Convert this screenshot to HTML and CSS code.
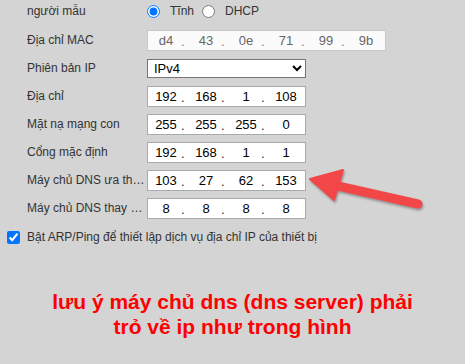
FILE: index.html
```html
<!DOCTYPE html>
<html lang="vi">
<head>
    <meta charset="UTF-8">
    <meta name="viewport" content="width=device-width, initial-scale=1.0">
    <title>Cài đặt mạng</title>
    <link rel="stylesheet" href="styles.css">
</head>
<body>
    <div class="form">
        <div class="row row-mode">
            <span class="label">người mẫu</span>
            <div class="radios">
                <label><input type="radio" name="mode" checked>Tĩnh</label>
                <label><input type="radio" name="mode">DHCP</label>
            </div>
        </div>
        <div class="row">
            <span class="label">Địa chỉ MAC</span>
            <div class="ip-box mac">
                <input type="text" value="d4" disabled><span class="dot">.</span>
                <input type="text" value="43" disabled><span class="dot">.</span>
                <input type="text" value="0e" disabled><span class="dot">.</span>
                <input type="text" value="71" disabled><span class="dot">.</span>
                <input type="text" value="99" disabled><span class="dot">.</span>
                <input type="text" value="9b" disabled>
            </div>
        </div>
        <div class="row">
            <span class="label">Phiên bản IP</span>
            <select class="select">
                <option>IPv4</option>
                <option>IPv6</option>
            </select>
        </div>
        <div class="row">
            <span class="label">Địa chỉ</span>
            <div class="ip-box">
                <input type="text" value="192"><span class="dot">.</span>
                <input type="text" value="168"><span class="dot">.</span>
                <input type="text" value="1"><span class="dot">.</span>
                <input type="text" value="108">
            </div>
        </div>
        <div class="row">
            <span class="label">Mặt nạ mạng con</span>
            <div class="ip-box">
                <input type="text" value="255"><span class="dot">.</span>
                <input type="text" value="255"><span class="dot">.</span>
                <input type="text" value="255"><span class="dot">.</span>
                <input type="text" value="0">
            </div>
        </div>
        <div class="row">
            <span class="label">Cổng mặc định</span>
            <div class="ip-box">
                <input type="text" value="192"><span class="dot">.</span>
                <input type="text" value="168"><span class="dot">.</span>
                <input type="text" value="1"><span class="dot">.</span>
                <input type="text" value="1">
            </div>
        </div>
        <div class="row">
            <span class="label" title="Máy chủ DNS ưa thích">Máy chủ DNS ưa thích</span>
            <div class="ip-box">
                <input type="text" value="103"><span class="dot">.</span>
                <input type="text" value="27"><span class="dot">.</span>
                <input type="text" value="62"><span class="dot">.</span>
                <input type="text" value="153">
            </div>
        </div>
        <div class="row">
            <span class="label" title="Máy chủ DNS thay thế">Máy chủ DNS thay thế</span>
            <div class="ip-box">
                <input type="text" value="8"><span class="dot">.</span>
                <input type="text" value="8"><span class="dot">.</span>
                <input type="text" value="8"><span class="dot">.</span>
                <input type="text" value="8">
            </div>
        </div>
        <label class="check-row">
            <input type="checkbox" checked>
            Bật ARP/Ping để thiết lập dịch vụ địa chỉ IP của thiết bị
        </label>
    </div>

    <p class="note">lưu ý máy chủ dns (dns server) phải<br>trỏ về ip như trong hình</p>

    <!-- arrow pointing at the preferred DNS field -->
    <svg class="arrow" width="465" height="364" viewBox="0 0 465 364">
        <line x1="338" y1="186" x2="418" y2="204" stroke="#f24747" stroke-width="9" stroke-linecap="round"/>
        <polygon points="310,179 343,170 334,200" fill="#f24747" stroke="#f24747" stroke-width="2" stroke-linejoin="round"/>
    </svg>
</body>
</html>
```

FILE: styles.css
```css
body {
    font-family: "Liberation Sans", Arial, sans-serif;
    margin: 0;
    padding: 0;
    background: #d4d4d4;
    color: #333;
    width: 465px;
    height: 364px;
    overflow: hidden;
    position: relative;
}
.form {
    padding-left: 27px;
}
.row {
    display: flex;
    align-items: center;
    height: 28px;
    font-size: 12px;
}
.row-mode {
    height: 22px;
    margin-bottom: 4px;
}
.label {
    width: 118px;
    margin-right: 2px;
    white-space: nowrap;
    overflow: hidden;
    text-overflow: ellipsis;
}
.radios {
    display: flex;
    align-items: center;
}
.radios label {
    display: flex;
    align-items: center;
    margin-right: 8px;
}
.radios input {
    margin: 0 10px 0 0;
    width: 13px;
    height: 13px;
}
.ip-box {
    display: flex;
    align-items: center;
    box-sizing: border-box;
    width: 159px;
    height: 21px;
    padding-left: 3px;
    background: #fff;
    border: 1px solid #aaa;
}
.ip-box.mac {
    width: 239px;
    background: #fbfbfb;
    border-color: #c8c8c8;
}
.ip-box input {
    width: 30px;
    padding: 0;
    border: none;
    outline: none;
    background: transparent;
    text-align: center;
    font-family: inherit;
    font-size: 13px;
    color: #000;
}
.ip-box.mac input {
    color: #666;
}
.dot {
    width: 10px;
    font-size: 13px;
    color: #222;
    padding-top: 3px;
}
.mac .dot {
    color: #777;
}
.select {
    box-sizing: border-box;
    width: 159px;
    height: 19px;
    padding: 0 2px;
    font-family: inherit;
    font-size: 13px;
    color: #000;
    background: #fff;
    border: 1px solid #767676;
    border-radius: 0;
}
.check-row {
    display: flex;
    align-items: center;
    height: 30px;
    margin-left: -20px;
    font-size: 12px;
}
.check-row input {
    width: 13px;
    height: 13px;
    margin: 0 7px 0 0;
}
.note {
    margin: 37px 0 0;
    text-align: center;
    font-size: 21px;
    font-weight: bold;
    line-height: 25px;
    color: #f00;
}
.arrow {
    position: absolute;
    left: 0;
    top: 0;
    pointer-events: none;
    filter: drop-shadow(1px 2px 1px rgba(0, 0, 0, 0.3));
}
```
